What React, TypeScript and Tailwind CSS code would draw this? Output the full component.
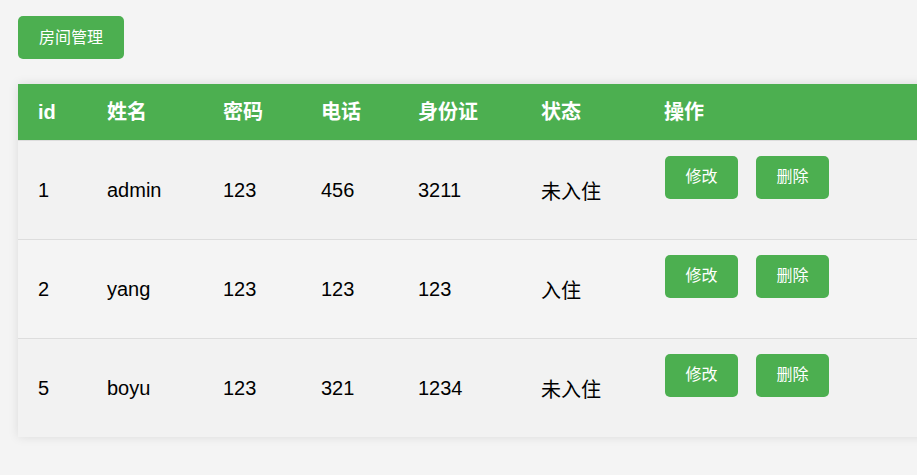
const rows = [
    { id: 1, name: 'admin', pwd: '123', phone: '456', card: '3211', status: '未入住', bg: 'bg-[#f2f2f2]' },
    { id: 2, name: 'yang', pwd: '123', phone: '123', card: '123', status: '入住', bg: 'bg-[#f4f4f4]' },
    { id: 5, name: 'boyu', pwd: '123', phone: '321', card: '1234', status: '未入住', bg: 'bg-[#f2f2f2]' },
];

const headers = ['id', '姓名', '密码', '电话', '身份证', '状态', '操作'];
const widths = ['w-[69px]', 'w-[116px]', 'w-[98px]', 'w-[97px]', 'w-[123px]', 'w-[123px]', ''];

export default function App() {
    return (
        <div
            className="min-h-screen w-full overflow-hidden bg-[#f4f4f4] pt-4 pl-[18px] text-black"
            style={{ fontFamily: '"Liberation Sans", "Noto Sans CJK SC", sans-serif' }}
        >
            <button className="h-[43px] px-[21px] rounded-[5px] bg-[#4caf50] text-white text-base">
                房间管理
            </button>

            <div className="mt-[25px] w-[1049px] shadow-[0_0_10px_rgba(0,0,0,0.1)]">
                <table className="w-full border-collapse table-fixed">
                    <thead>
                        <tr className="bg-[#4caf50] text-white">
                            {headers.map((h, i) => (
                                <th
                                    key={h}
                                    className={`${widths[i]} h-[56px] px-5 text-left text-[20px] font-bold border-b border-[#dddddd]`}
                                >
                                    {h}
                                </th>
                            ))}
                        </tr>
                    </thead>
                    <tbody>
                        {rows.map((r, idx) => (
                            <tr key={r.id} className={`${r.bg} ${idx < rows.length - 1 ? 'border-b border-[#dddddd]' : ''}`}>
                                <td className="h-[99px] px-5 text-[20px] align-middle">{r.id}</td>
                                <td className="px-5 text-[20px] align-middle">{r.name}</td>
                                <td className="px-5 text-[20px] align-middle">{r.pwd}</td>
                                <td className="px-5 text-[20px] align-middle">{r.phone}</td>
                                <td className="px-5 text-[20px] align-middle">{r.card}</td>
                                <td className="px-5 pt-1 text-[20px] align-middle">{r.status}</td>
                                <td className="pl-[21px] pr-5 pt-[15px] align-top">
                                    <div className="flex gap-[18px]">
                                        <button className="h-[43px] w-[73px] rounded-[5px] bg-[#4caf50] text-white text-base">
                                            修改
                                        </button>
                                        <button className="h-[43px] w-[73px] rounded-[5px] bg-[#4caf50] text-white text-base">
                                            删除
                                        </button>
                                    </div>
                                </td>
                            </tr>
                        ))}
                    </tbody>
                </table>
            </div>
        </div>
    );
}
